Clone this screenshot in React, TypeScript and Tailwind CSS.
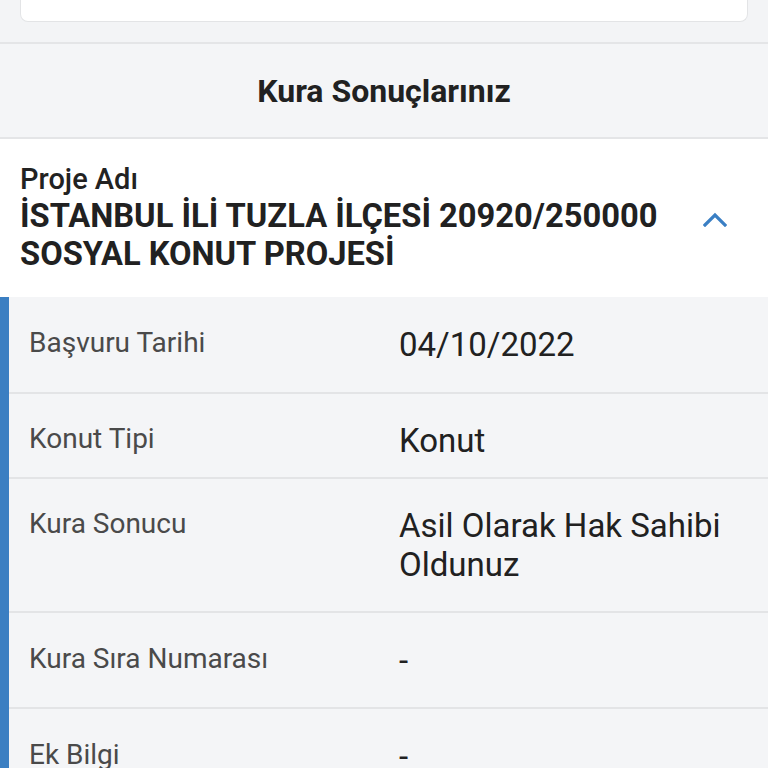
import React from 'react';

const rows = [
  { label: 'Başvuru Tarihi', value: '04/10/2022', pad: 'pt-[28px] pb-[28px]' },
  { label: 'Konut Tipi', value: 'Konut', pad: 'pt-[27px] pb-[17px]' },
  { label: 'Kura Sonucu', value: 'Asil Olarak Hak Sahibi Oldunuz', pad: 'pt-[27px] pb-[27px]' },
  { label: 'Kura Sıra Numarası', value: '-', pad: 'pt-[28px] pb-[27px]' },
  { label: 'Ek Bilgi', value: '-', pad: 'pt-[28px] pb-[27px]' },
];

export default function App() {
  return (
    <div className="min-h-[768px] bg-[#f3f4f6] font-['Roboto',sans-serif] overflow-hidden">
      {/* tail of the card above */}
      <div className="h-[42px]">
        <div className="mx-5 h-[22px] bg-white rounded-b-lg border border-t-0 border-[#e3e4e6]" />
      </div>

      {/* section header */}
      <div className="h-[97px] border-y-2 border-[#e4e5e7] bg-[#f4f5f7] flex items-center justify-center">
        <h2 className="text-[32px] font-bold text-[#212121] leading-none">Kura Sonuçlarınız</h2>
      </div>

      {/* project title */}
      <div className="bg-white h-[158px] flex items-start px-5 pt-[24px]">
        <div className="flex-1 max-w-[680px]">
          <div className="text-[29px] font-medium text-[#222] leading-[32px]">Proje Adı</div>
          <div className="mt-[2px] text-[32.7px] font-bold text-[#212121] leading-[38px]">
            İSTANBUL İLİ TUZLA İLÇESİ 20920/250000 SOSYAL KONUT PROJESİ
          </div>
        </div>
        <div className="ml-auto mr-[21px] mt-[49px]">
          <svg width="24" height="15" viewBox="0 0 24 15" fill="none">
            <path d="M2 13 L12 3 L22 13" stroke="#3a7fc4" strokeWidth="3.2" strokeLinecap="square" />
          </svg>
        </div>
      </div>

      {/* detail rows */}
      <div className="flex">
        <div className="w-[9px] bg-[#3b7fc2] shrink-0" />
        <div className="flex-1 bg-[#f4f5f7]">
          {rows.map((r) => (
            <div key={r.label} className={`flex items-start border-b-2 border-[#e3e4e6] pl-5 ${r.pad}`}>
              <div className="w-[370px] shrink-0 text-[28px] leading-[35px] text-[#4a4a4a]">{r.label}</div>
              <div className="flex-1 pr-10 text-[33px] leading-[39px] text-[#212121]">{r.value}</div>
            </div>
          ))}
        </div>
      </div>
    </div>
  );
}
